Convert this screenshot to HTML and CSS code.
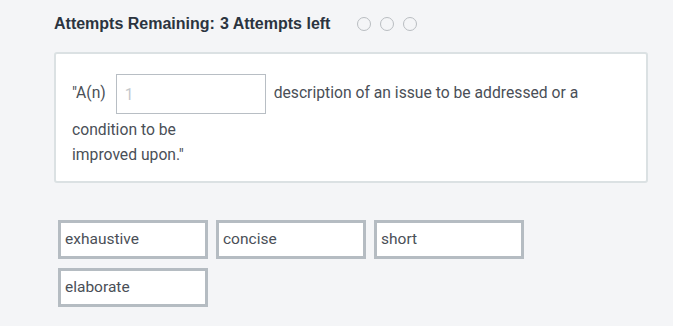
FILE: index.html
```html
<!DOCTYPE html>
<html>
<head>
<meta charset="utf-8">
<link rel="stylesheet" href="styles.css">
</head>
<body>
<div class="wrap">
  <div class="attempts">
    <span class="label">Attempts Remaining:</span>
    <span class="count">3 Attempts left</span>
    <span class="dots"><span class="dot"></span><span class="dot"></span><span class="dot"></span></span>
  </div>
  <div class="card">
    <p class="sentence">"A(n) <input class="blank" type="text" placeholder="1"> description of an issue to be addressed or a<br>condition to be<br>improved upon."</p>
  </div>
  <div class="options">
    <div class="opt">exhaustive</div>
    <div class="opt">concise</div>
    <div class="opt">short</div>
    <div class="opt">elaborate</div>
  </div>
</div>
</body>
</html>
```
FILE: styles.css
```css
html, body {
  margin: 0;
  padding: 0;
  background: #f4f5f7;
}
body {
  font-family: Roboto, "Noto Sans", sans-serif;
  color: #4a4f57;
}
.wrap {
  padding: 0 25px 0 54px;
}
.attempts {
  display: flex;
  align-items: center;
  height: 48px;
  font-family: "Liberation Sans", Arial, sans-serif;
  font-weight: bold;
  font-size: 16px;
  color: #2b3440;
}
.count {
  margin-left: 5px;
}
.dots {
  display: flex;
  gap: 9px;
  margin-left: 27px;
}
.dot {
  width: 12px;
  height: 12px;
  border: 1.5px solid #b9bdc1;
  border-radius: 50%;
}
.card {
  margin-top: 4px;
  background: #fff;
  border: 2px solid #dbe1e3;
  border-radius: 3px;
  width: 594px;
  padding: 17px 16px 14px 16px;
  box-sizing: border-box;
}
.sentence {
  margin: 0;
  font-size: 15.7px;
  line-height: 25px;
  color: #4a4f57;
}
.blank {
  width: 150px;
  height: 40px;
  box-sizing: border-box;
  border: 1px solid #b8bec4;
  margin: 3px 4px 3px 6px;
  padding: 0 8px;
  font-family: Roboto, sans-serif;
  font-size: 15.7px;
  vertical-align: middle;
}
.blank::placeholder {
  color: #c3c8cc;
}
.options {
  display: flex;
  flex-wrap: wrap;
  column-gap: 8px;
  row-gap: 9px;
  width: 480px;
  margin: 37px 0 0 4px;
}
.opt {
  width: 150px;
  height: 39px;
  box-sizing: border-box;
  border: 3px solid #b5bcc2;
  background: #fff;
  padding: 6px 4px;
  font-size: 15.5px;
  line-height: 20px;
  color: #4a4f57;
}
```
